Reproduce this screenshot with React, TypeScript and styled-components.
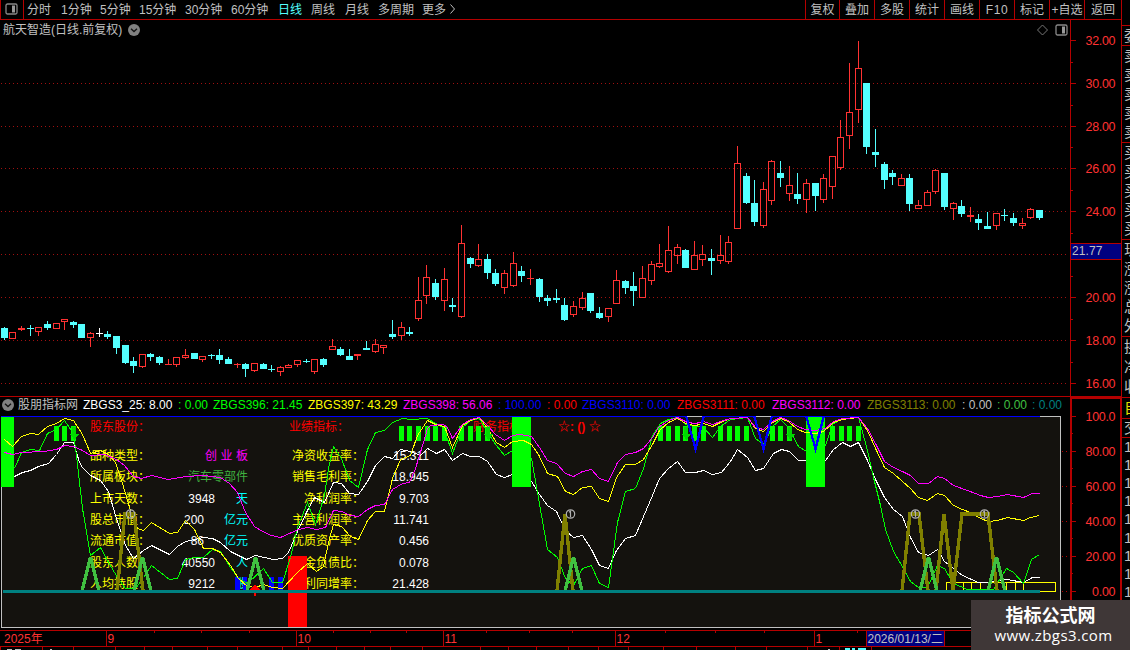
import React from "react";
import styled, { createGlobalStyle } from "styled-components";

const RED = "#b40000";
const LABEL = "#ff3232";
const GREY = "#c0c0c0";
const UP = "#ff3232";
const DOWN = "#54ffff";

const Global = createGlobalStyle`
  * { box-sizing: border-box; }
  html, body { margin: 0; background: #000; overflow: hidden; }
  body {
    font-family: "Liberation Sans", "Noto Sans CJK SC", sans-serif;
    font-size: 12px;
    line-height: 14px;
    color: ${GREY};
  }
`;

/* ---------- data ---------- */

// kind, high, body top, body bottom, low
type Candle = [string, number, number, number, number];
const candles: Candle[] = [
  ["c", 327, 328, 338, 340], ["r", 332, 332, 339, 339], ["r", 326, 328, 330, 331], ["c", 325, 328, 329, 336],
  ["r", 327, 327, 332, 336], ["c", 321, 324, 328, 330], ["r", 323, 323, 329, 329], ["r", 319, 319, 322, 330],
  ["c", 321, 322, 325, 328], ["c", 324, 324, 338, 338], ["r", 332, 333, 338, 347], ["w", 328, 333, 334, 337],
  ["c", 331, 334, 337, 339], ["c", 336, 336, 348, 354], ["c", 345, 345, 363, 364], ["c", 357, 361, 366, 373],
  ["r", 354, 354, 367, 368], ["c", 353, 354, 357, 361], ["c", 356, 357, 363, 365], ["r", 359, 364, 365, 365],
  ["r", 357, 357, 365, 367], ["r", 349, 355, 358, 359], ["c", 353, 353, 359, 359], ["r", 356, 356, 360, 362],
  ["c", 354, 355, 356, 359], ["c", 349, 355, 360, 364], ["c", 357, 359, 364, 364], ["r", 363, 364, 365, 368],
  ["c", 363, 364, 369, 377], ["r", 363, 363, 371, 372], ["c", 363, 364, 369, 369], ["c", 365, 369, 370, 372],
  ["r", 366, 367, 372, 376], ["r", 364, 365, 368, 368], ["r", 360, 360, 365, 367], ["c", 359, 361, 362, 363],
  ["r", 359, 359, 372, 374], ["c", 358, 359, 365, 367], ["r", 339, 346, 350, 350], ["c", 347, 349, 355, 356],
  ["c", 349, 356, 360, 360], ["r", 354, 354, 356, 360], ["c", 341, 348, 350, 350], ["r", 339, 344, 352, 353],
  ["r", 345, 345, 348, 354], ["c", 320, 334, 337, 339], ["r", 322, 327, 336, 340], ["c", 327, 332, 334, 336],
  ["r", 277, 300, 319, 321], ["r", 265, 277, 296, 304], ["c", 279, 283, 297, 300], ["r", 268, 279, 301, 311],
  ["c", 298, 305, 307, 312], ["r", 225, 243, 317, 318], ["c", 257, 258, 264, 268], ["r", 244, 259, 266, 267],
  ["c", 254, 259, 273, 279], ["c", 269, 273, 284, 286], ["r", 270, 273, 288, 294], ["r", 252, 263, 286, 287],
  ["c", 266, 271, 276, 282], ["r", 269, 278, 279, 285], ["c", 278, 279, 297, 302], ["c", 295, 298, 301, 306],
  ["c", 289, 298, 300, 303], ["c", 298, 305, 320, 321], ["r", 301, 306, 315, 317], ["r", 292, 298, 308, 310],
  ["c", 293, 293, 311, 313], ["c", 307, 313, 318, 319], ["r", 308, 308, 317, 322], ["r", 270, 280, 304, 304],
  ["c", 280, 281, 288, 294], ["c", 272, 286, 291, 306], ["r", 266, 278, 298, 298], ["r", 261, 264, 281, 285],
  ["r", 244, 263, 267, 268], ["r", 226, 250, 272, 273], ["r", 244, 247, 256, 264], ["c", 249, 250, 268, 268],
  ["r", 241, 255, 270, 270], ["r", 245, 254, 260, 266], ["c", 249, 258, 261, 275], ["r", 235, 255, 261, 264],
  ["r", 236, 242, 262, 264], ["r", 146, 163, 229, 229], ["c", 173, 176, 203, 204], ["c", 180, 203, 222, 226],
  ["r", 182, 189, 226, 228], ["r", 160, 161, 201, 205], ["c", 161, 173, 178, 187], ["r", 166, 185, 194, 201],
  ["c", 173, 194, 199, 204], ["r", 179, 183, 200, 213], ["c", 183, 183, 196, 211], ["r", 174, 178, 200, 203],
  ["r", 156, 156, 187, 199], ["r", 120, 137, 168, 170], ["r", 63, 112, 136, 149], ["r", 41, 68, 110, 123],
  ["c", 83, 83, 147, 154], ["c", 129, 152, 155, 167], ["c", 162, 164, 180, 189], ["c", 170, 173, 177, 185],
  ["r", 174, 178, 186, 186], ["c", 174, 178, 204, 211], ["r", 200, 205, 209, 209], ["r", 190, 192, 206, 206],
  ["r", 169, 170, 192, 194], ["c", 173, 173, 207, 210], ["r", 202, 203, 209, 220], ["c", 200, 206, 214, 217],
  ["r", 207, 215, 217, 222], ["c", 214, 219, 223, 230], ["c", 212, 226, 229, 229], ["r", 213, 213, 226, 230],
  ["c", 209, 215, 216, 221], ["c", 213, 218, 223, 226], ["r", 218, 223, 226, 229], ["r", 208, 209, 218, 219],
  ["c", 210, 210, 218, 220],
];

const magenta =
  "4,452 12,454 21,452 43,451 56,449 64,445 73,446 82,450 90,455 104,454 116,459 124,465 133,476 141,478 151,475 168,479 185,476 203,475 220,477 229,483 237,492 245,512 254,526 262,531 271,535 280,537 289,533 298,529 307,527 316,529 325,527 333,510 341,511 350,515 358,516 367,509 375,505 384,504 392,489 402,483 409,482 415,468 423,442 427,428 430,425 443,424 447,427 452,438 462,424 470,419 479,417 487,425 495,434 504,440 512,435 520,434 531,436 539,447 547,460 556,463 565,473 573,476 582,471 591,469 599,478 608,481 617,462 625,454 635,452 643,448 652,437 658,427 668,420 677,417 687,422 695,423 703,421 712,424 720,421 730,418 747,417 755,427 763,429 772,421 780,417 788,420 797,426 805,429 815,430 825,428 833,421 842,418 858,417 867,428 876,445 884,461 893,467 902,471 910,475 918,483 928,483 937,476 944,478 953,485 967,490 980,495 988,497 997,496 1007,494 1023,497 1032,493 1039,493";
const yellow =
  "4,439 12,446 21,436 30,433 38,434 47,426 56,423 64,418 73,420 82,434 90,453 100,450 108,454 115,462 122,483 130,510 137,528 143,530 151,522 169,533 177,532 185,520 194,529 203,548 212,548 220,552 230,565 238,578 247,586 255,587 263,584 272,587 282,588 297,572 307,563 316,571 323,566 328,542 333,524 341,526 350,536 358,539 367,520 375,511 384,511 392,478 400,459 410,455 417,435 427,420 435,424 444,426 452,447 462,425 470,420 479,417 487,428 496,442 504,447 512,441 523,440 531,444 538,454 547,473 557,476 565,491 573,494 582,487 591,486 599,498 608,501 616,477 625,464 635,464 643,459 652,444 659,430 668,422 677,418 687,424 695,425 703,423 712,426 720,422 730,418 747,417 755,428 763,431 772,422 780,418 788,421 797,429 805,432 815,433 823,431 833,422 842,419 858,417 867,430 876,450 884,467 893,473 902,481 910,488 918,497 927,500 937,493 944,495 953,505 962,509 970,512 980,518 988,521 997,520 1007,517 1023,520 1030,517 1039,515";
const white =
  "14,476 22,472 30,470 38,466 48,463 56,454 64,442 73,442 79,462 82,467 90,475 100,480 108,491 115,515 125,545 133,558 143,550 151,545 169,554 177,546 185,541 203,537 212,538 220,542 230,551 246,559 255,555 273,559 282,558 288,552 297,531 307,510 314,497 324,502 333,482 341,483 349,493 358,494 367,481 375,465 384,456 392,458 400,449 410,451 420,455 427,448 436,453 444,449 452,460 462,453 470,456 479,456 487,461 496,474 504,477 512,474 520,473 531,481 539,494 547,505 556,511 565,530 573,537 582,535 591,549 599,565 608,568 616,550 625,538 635,535 643,516 652,495 659,478 668,468 677,461 685,472 695,472 703,470 712,474 721,472 730,461 737,449 747,457 755,470 763,468 773,453 781,449 789,451 798,460 807,460 825,460 833,449 842,442 850,446 858,442 867,460 875,479 884,497 893,509 902,516 910,537 918,552 928,555 937,549 944,561 953,568 962,575 978,582 988,582 1007,579 1023,582 1032,577 1039,577";
const green =
  "14,468 21,452 30,449 39,450 47,433 56,429 64,420 73,433 76,455 82,508 90,555 100,547 108,562 117,577 125,588 135,588 143,577 151,565 160,572 169,579 177,578 185,559 194,557 203,557 212,549 220,551 230,567 238,578 247,583 263,568 272,582 282,582 290,557 297,527 307,502 315,524 324,495 328,468 333,446 341,458 349,480 358,487 367,449 375,432 384,430 392,422 402,418 410,419 427,418 435,423 443,427 452,453 462,427 470,420 479,418 487,432 496,445 504,455 512,450 531,458 537,492 547,549 557,557 565,578 573,585 582,568 591,565 599,583 608,587 617,522 625,491 635,488 643,468 652,435 660,423 668,419 677,417 687,425 702,426 712,437 720,426 730,419 747,417 755,438 763,444 772,426 780,419 788,427 798,446 806,451 825,445 832,424 842,418 858,417 867,450 873,477 880,505 885,529 893,551 903,568 910,581 918,587 927,587 937,565 944,568 953,583 967,589 993,589 1006,568 1013,572 1023,583 1031,559 1039,554";

const smallBars = [54, 62, 71, 399, 407, 416, 425, 433, 442, 459, 468, 476, 485, 658, 666, 675, 683, 692, 701, 718, 727, 735, 744, 770, 778, 787, 830, 839, 847, 856];
const arrows = [73, 487, 685, 789];
const wideBars: [number, number][] = [[1, 13], [512, 19], [806, 19]];
const circles = [130, 570, 915, 984];
const greenPeaks = [90, 142, 255, 573, 928, 996];
const olive = ["117,591 125,514 134,514 143,591", "557,591 565,514 573,591", "902,591 910,514 919,514 928,591", "936,591 944,514 953,591 962,514 988,514 997,591"];
const blueDips = [695, 763, 815];

const gridYs = [83, 126, 168, 211, 254, 297, 340, 383];
const prices: [number, string][] = [
  [40, "32.00"], [83, "30.00"], [126, "28.00"], [168, "26.00"], [211, "24.00"], [297, "20.00"], [340, "18.00"], [383, "16.00"],
];
const levels: [number, string][] = [
  [416, "100.0"], [451, "80.00"], [486, "60.00"], [521, "40.00"], [556, "20.00"], [591, "0.00"],
];

/* ---------- layout ---------- */

const Page = styled.div`
  position: relative;
  display: flex;
  width: 1130px;
  height: 650px;
  overflow: hidden;
  background: #000;
`;
const Main = styled.div`
  display: flex;
  flex-direction: column;
  width: 1122px;
  flex: none;
`;

const Toolbar = styled.div`
  display: flex;
  height: 20px;
  border-bottom: 1px solid ${RED};
  border-right: 1px solid ${RED};
  flex: none;
`;
const ToggleBox = styled.div`
  width: 24px;
  padding: 3px 0 0 4px;
  border-left: 1px solid ${RED};
  border-right: 1px solid ${RED};
`;
const Tab = styled.span<{ $w: number; $active?: boolean }>`
  width: ${(p) => p.$w}px;
  padding-top: 3px;
  white-space: nowrap;
  color: ${(p) => (p.$active ? DOWN : GREY)};
`;
const Periods = styled.div`
  display: flex;
  flex: 1;
  padding-left: 3px;
`;
const Tool = styled.span<{ $w: number; $wide?: boolean }>`
  width: ${(p) => p.$w}px;
  border-left: 1px solid ${RED};
  padding-top: 3px;
  text-align: center;
  white-space: nowrap;
  letter-spacing: ${(p) => (p.$wide ? "0.6px" : "0")};
`;

const PricePane = styled.div`
  position: relative;
  height: 376px;
  flex: none;
`;
const Title = styled.div`
  position: relative;
  display: flex;
  align-items: center;
  height: 19px;
  padding-left: 3px;
  gap: 5px;
  white-space: nowrap;
`;
const TitleText = styled.span`
  width: 120px;
`;
const TitleIcons = styled.div`
  display: flex;
  gap: 7px;
  margin-left: auto;
  padding-right: 54px;
`;
const Canvas = styled.svg`
  position: absolute;
  left: 0;
  top: 0;
  display: block;
  text {
    font-size: 12.5px;
    fill: ${LABEL};
  }
`;
const PriceTag = styled.div`
  position: absolute;
  left: 1071px;
  top: 223px;
  width: 50px;
  height: 17px;
  padding-left: 1px;
  border: solid ${RED};
  border-width: 1px 0;
  background: #000080;
  letter-spacing: 0.1px;
`;

const IndicatorPane = styled.div`
  position: relative;
  height: 234px;
  flex: none;
  border-top: 1px solid ${RED};
`;
const Legend = styled.div`
  display: flex;
  align-items: center;
  height: 19px;
  padding: 0 0 3px 2px;
  white-space: nowrap;
`;
const LegendName = styled.span`
  width: 69px;
  padding-left: 4px;
`;
const LegendItem = styled.span<{ $w: number; $c: string }>`
  width: ${(p) => p.$w}px;
  color: ${(p) => p.$c};
`;
const Plot = styled.div`
  position: relative;
  display: flex;
  width: 1060px;
  height: 212px;
  margin-left: 1px;
  padding-left: 88px;
  border: 1px solid ${GREY};
  background: #14120e;
`;
const InfoTable = styled.div<{ $w: number }>`
  width: ${(p) => p.$w}px;
  flex: none;
`;
const Heading = styled.div<{ $shift?: number; $strong?: boolean }>`
  height: 28px;
  padding: 3px 0 0 ${(p) => p.$shift ?? 0}px;
  color: #f00;
  font-weight: ${(p) => (p.$strong ? 700 : 400)};
  white-space: pre;
`;
const Row = styled.div`
  display: flex;
  height: 21.33px;
  padding-top: 4px;
  white-space: nowrap;
`;
const Name = styled.span<{ $w: number; $right?: boolean }>`
  width: ${(p) => p.$w}px;
  color: #ff0;
  text-align: ${(p) => (p.$right ? "right" : "left")};
`;
const Figure = styled.span<{ $w: number }>`
  width: ${(p) => p.$w}px;
  color: #fff;
  text-align: right;
`;
const Unit = styled.span<{ $c: string; $track?: number }>`
  flex: 1;
  color: ${(p) => p.$c};
  letter-spacing: ${(p) => p.$track ?? 0}px;
  margin-right: ${(p) => -(p.$track ?? 0)}px;
  text-align: right;
`;

const TimeAxis = styled.div`
  position: relative;
  display: flex;
  height: 17px;
  flex: none;
  border: solid ${RED};
  border-width: 1px 0;
  color: ${LABEL};
`;
const Month = styled.span<{ $w: number; $pad?: number; $on?: boolean }>`
  width: ${(p) => p.$w}px;
  padding: 1px 0 0 ${(p) => p.$pad ?? 0.5}px;
  border-right: 1px solid ${RED};
  background: ${(p) => (p.$on ? "#000080" : "none")};
  color: ${(p) => (p.$on ? GREY : LABEL)};
  white-space: nowrap;
`;
const Ticker = styled.svg`
  display: block;
  height: 3px;
`;

const Side = styled.div`
  width: 8px;
  padding-top: 25px;
  overflow: hidden;
`;
const Group = styled.div<{ $h: number; $c?: string }>`
  display: flex;
  flex-direction: column;
  justify-content: space-around;
  height: ${(p) => p.$h}px;
  padding-left: 2px;
  border-top: 1px solid ${RED};
  font-size: 15px;
  line-height: 18px;
  white-space: nowrap;
  color: ${(p) => p.$c ?? GREY};
`;

const Watermark = styled.div`
  position: absolute;
  right: 0;
  bottom: 0;
  width: 159px;
  height: 50px;
  padding: 3px 0 0 0;
  background: #3f3737;
  color: #fff;
  text-align: center;
  font-family: "Open Sans", "Noto Sans CJK SC", sans-serif;
`;
const MarkName = styled.div`
  font-family: "Noto Sans CJK SC", sans-serif;
  font-size: 18px;
  font-weight: 700;
  line-height: 22px;
`;
const MarkUrl = styled.div`
  padding-left: 6px;
  font-size: 15px;
  line-height: 21px;
  letter-spacing: 0.4px;
`;

/* ---------- drawings ---------- */

const PanelIcon = () => (
  <svg width="13" height="12" viewBox="0 0 13 12">
    <rect x="1" y="1" width="11" height="10" rx="1.5" fill="none" stroke="#888" strokeWidth="1.3" />
    <rect x="7" y="2.5" width="3" height="7" fill="#999" />
  </svg>
);
const Disc = () => (
  <svg width="12" height="12" viewBox="0 0 12 12">
    <circle cx="6" cy="6" r="6" fill="#808080" />
    <path d="M3 4.8 6 7.6 9 4.8" fill="none" stroke="#111" strokeWidth="1.3" />
  </svg>
);

const centre = (i: number) => Math.floor(4.3 + i * 8.625);

const CandleMark = ({ i, c }: { i: number; c: Candle }) => {
  const [kind, hi, top, bottom, lo] = c;
  const x = centre(i);
  const color = kind === "r" ? UP : kind === "c" ? DOWN : "#fff";
  const hollow = kind === "r" && bottom - top > 2;
  return (
    <g fill={color}>
      {top > hi && <rect x={x} y={hi} width="1" height={top - hi} />}
      {lo > bottom && <rect x={x} y={bottom} width="1" height={lo - bottom} />}
      {hollow ? (
        <path
          fillRule="evenodd"
          d={`M${x - 3} ${top}h7v${bottom - top}h-7zM${x - 2} ${top + 1}v${bottom - top - 2}h5v${top + 2 - bottom}z`}
        />
      ) : (
        <rect x={x - 3} y={top} width="7" height={bottom - top} />
      )}
    </g>
  );
};

const PriceChart = () => (
  <Canvas width="1122" height="376" viewBox="0 20 1122 376" shapeRendering="crispEdges">
    {gridYs.map((y) => (
      <line key={y} x1="1" x2="1067" y1={y + 0.5} y2={y + 0.5} stroke="#a01010" strokeDasharray="1 3" />
    ))}
    {candles.map((c, i) => (
      <CandleMark key={i} i={i} c={c} />
    ))}
    <rect x="1070" y="20" width="1" height="376" fill={RED} />
    <rect x="1121" y="20" width="1" height="376" fill={RED} />
    {[40, ...gridYs].map((y) => (
      <rect key={y} x="1071" y={y} width="5" height="1" fill={RED} />
    ))}
    {[62, 105, 147, 190, 233, 276, 319, 362].map((y) => (
      <rect key={y} x="1071" y={y} width="2" height="1" fill={RED} />
    ))}
    {prices.map(([y, t]) => (
      <text key={t} x="1085.5" y={y + 5} textLength="30">{t}</text>
    ))}
  </Canvas>
);

const IndicatorChart = () => (
  <Canvas width="1122" height="233" viewBox="0 397 1122 233" shapeRendering="crispEdges">
    <rect x="1" y="416" width="1039" height="1" fill="#00f" />
    {wideBars.map(([x, w]) => (
      <rect key={x} x={x} y="417" width={w} height="70" fill="#0f0" />
    ))}
    {smallBars.map((x) => (
      <rect key={x} x={x} y="426" width="5" height="15" fill="#0f0" />
    ))}
    <rect x="288" y="556" width="19" height="71" fill="#f00" />
    {[[235, 5], [243, 4], [269, 5], [278, 5]].map(([x, w]) => (
      <rect key={x} x={x} y="577" width={w} height="14" fill="#00f" />
    ))}
    <g fill="none" transform="translate(0.5 0.5)">
      <g stroke="#ff0">
        <rect x="946" y="582" width="109" height="9" />
        {[963, 971, 980, 997, 1006, 1015, 1023].map((x) => (
          <line key={x} x1={x} x2={x} y1="582" y2="591" />
        ))}
      </g>
      <polyline points={white} stroke="#fff" />
      <polyline points={green} stroke="#0f0" />
    </g>
    {/* the signal columns hide the slower averages that pass behind them */}
    <rect x="512" y="442" width="19" height="45" fill="#0f0" />
    <rect x="806" y="434" width="19" height="53" fill="#0f0" />
    <g fill="none" transform="translate(0.5 0.5)">
      <polyline points={yellow} stroke="#ff0" />
      <polyline points={magenta} stroke="#f0f" />
    </g>
    {arrows.map((x) => (
      <path key={x} d={`M${x - 1} 427h4v7h3l-4.5 6l-4.5 -6h2z`} fill="#00d800" />
    ))}
    <g fill="none" strokeWidth="3.4">
      {olive.map((p) => (
        <polyline key={p} points={p} stroke="#808000" />
      ))}
      {greenPeaks.map((x) => (
        <polyline key={x} points={`${x - 8},591 ${x + 0.5},557 ${x + 9},591`} stroke="#40c040" />
      ))}
      {blueDips.map((x) => (
        <polyline key={x} points={`${x - 8.5},417 ${x + 0.5},449 ${x + 8.5},417`} stroke="#00f" strokeWidth="2.2" />
      ))}
    </g>
    <rect x="687" y="416" width="15" height="1" fill={GREY} />
    <rect x="756" y="416" width="15" height="1" fill={GREY} />
    <path d="M255 584l5 6h-4v6h-2v-6h-4z" fill="#f00" />
    <rect x="3" y="590" width="1037" height="3" fill="#008080" />
    <g shapeRendering="auto" fill="none" stroke="#b0b0b0" strokeWidth="1.2">
      {circles.map((x) => (
        <g key={x}>
          <circle cx={x + 0.5} cy="514" r="4.2" />
          <path d={`M${x - 1} 512.2l1.5-1v6`} />
        </g>
      ))}
    </g>
    <path d="M1071 630V398H1121V630" fill="none" stroke={RED} strokeWidth="2" />
    {levels.map(([y, t]) => (
      <g key={t}>
        <rect x="1072" y={y} width="4" height="1" fill={RED} />
        {y > 416 && <path d={`M1062 ${y + 0.5}h1m3 0h1`} stroke={RED} />}
        {y < 591 && <rect x="1072" y={y + 17} width="1" height="1" fill={RED} />}
        <text x={t.length === 4 ? 1092 : 1085.5} y={y + 5} textLength={t.length === 4 ? 23.5 : 30}>{t}</text>
      </g>
    ))}
  </Canvas>
);

const Ticks = ({ xs, h }: { xs: number[]; h: number }) => (
  <>
    {xs.map((x) => (
      <rect key={x} x={x} y="0" width="1" height={h} fill={RED} />
    ))}
  </>
);

/* ---------- content ---------- */

const periods: [string, number][] = [
  ["分时", 34], ["1分钟", 39], ["5分钟", 39], ["15分钟", 46], ["30分钟", 46], ["60分钟", 47],
  ["日线", 33], ["周线", 34], ["月线", 33], ["多周期", 44], ["更多", 26],
];
const tools: [string, number][] = [
  ["复权", 34], ["叠加", 35], ["多股", 35], ["统计", 35], ["画线", 35], ["F10", 35], ["标记", 35], ["+自选", 35], ["返回", 37],
];
const legend: [string, string, number][] = [
  ["ZBGS3_25: 8.00", "#fff", 95], [": 0.00", "#0f0", 35], ["ZBGS396: 21.45", "#0f0", 95],
  ["ZBGS397: 43.29", "#ff0", 95], ["ZBGS398: 56.06", "#f0f", 95], [": 100.00", "#00f", 49],
  [": 0.00", "#f00", 35], ["ZBGS3110: 0.00", "#00f", 95], ["ZBGS3111: 0.00", "#f00", 95],
  ["ZBGS3112: 0.00", "#f0f", 95], ["ZBGS3113: 0.00", "#808000", 95], [": 0.00", "#c0c0c0", 35],
  [": 0.00", "#40c040", 35], [": 0.00", "#008080", 35],
];
// name, number, width up to the number's right edge, unit, colour, tracking
const company: [string, string, number, string, string, number][] = [
  ["品种类型：", "", 0, "创业板", "#f0f", 3.5],
  ["所属板块：", "", 0, "汽车零部件", "#40b040", 0],
  ["上市天数：", "3948", 65, "天", "#0ff", 0],
  ["股总市值：", "200", 54, "亿元", "#0ff", 0],
  ["流通市值：", "86", 54, "亿元", "#0ff", 0],
  ["股东人数：", "40550", 65, "人", "#0ff", 0],
  ["人均持股：", "9212", 65, "股", "#0ff", 0],
];
const results: [string, string][] = [
  ["净资收益率：", "15.311"], ["销售毛利率：", "18.945"], ["净利润率：", "9.703"], ["主营利润率：", "11.741"],
  ["优质资产率：", "0.456"], ["资金负债比：", "0.078"], ["净利同增率：", "21.428"],
];

export default function App() {
  return (
    <Page>
      <Global />
      <Main>
        <Toolbar>
          <ToggleBox><PanelIcon /></ToggleBox>
          <Periods>
            {periods.map(([t, w]) => (
              <Tab key={t} $w={w} $active={t === "日线"}>{t}</Tab>
            ))}
            <svg width="10" height="18" viewBox="0 0 10 18">
              <path d="M2.5 4.5 6.5 9 2.5 13.5" fill="none" stroke={GREY} />
            </svg>
          </Periods>
          {tools.map(([t, w]) => (
            <Tool key={t} $w={w} $wide={t === "F10"}>{t}</Tool>
          ))}
        </Toolbar>

        <PricePane>
          <PriceChart />
          <Title>
            <TitleText>航天智造(日线.前复权)</TitleText>
            <Disc />
            <TitleIcons>
              <svg width="11" height="12" viewBox="0 0 11 12">
                <path d="M5.5 1 10.5 6 5.5 11 .5 6Z" fill="none" stroke="#777" />
              </svg>
              <PanelIcon />
            </TitleIcons>
          </Title>
          <PriceTag>21.77</PriceTag>
        </PricePane>

        <IndicatorPane>
          <Legend>
            <Disc />
            <LegendName>股朋指标网</LegendName>
            {legend.map(([t, c, w], i) => (
              <LegendItem key={i} $w={w} $c={c}>{t}</LegendItem>
            ))}
          </Legend>
          <Plot>
            <InfoTable $w={158}>
              <Heading>股东股份：</Heading>
              {company.map(([name, figure, w, unit, color, track]) => (
                <Row key={name}>
                  <Name $w={60}>{name}</Name>
                  <Figure $w={w}>{figure}</Figure>
                  <Unit $c={color} $track={track}>{unit}</Unit>
                </Row>
              ))}
            </InfoTable>
            <InfoTable $w={182}>
              <Heading $shift={41}>业绩指标：</Heading>
              {results.map(([name, figure]) => (
                <Row key={name}>
                  <Name $w={116} $right>{name}</Name>
                  <Figure $w={65}>{figure}</Figure>
                </Row>
              ))}
            </InfoTable>
            <InfoTable $w={128}>
              <Heading $shift={43}>财务指标：</Heading>
            </InfoTable>
            <InfoTable $w={60}>
              <Heading $strong>☆: () ☆</Heading>
            </InfoTable>
          </Plot>
          <IndicatorChart />
        </IndicatorPane>

        <TimeAxis>
          <Month $w={107} $pad={4}>2025年</Month>
          <Month $w={190}>9</Month>
          <Month $w={147}>10</Month>
          <Month $w={172}>11</Month>
          <Month $w={199}>12</Month>
          <Month $w={52}>1</Month>
          <Month $w={78} $on>2026/01/13/二</Month>
          <Canvas width="1122" height="3" viewBox="0 0 1122 3">
            <Ticks xs={[154, 201, 249, 333, 370, 406, 486, 529, 572, 665, 715, 764, 857]} h={2} />
          </Canvas>
        </TimeAxis>
        <Ticker width="1122" height="3" viewBox="0 0 1122 3">
          <Ticks xs={[0, 42, 73, 115, 144, 172, 207, 237, 282, 308, 336, 364, 390, 422, 480, 508, 536, 568, 598, 628, 663, 696, 735, 766, 807, 839, 871]} h={3} />
          <path d="M7 2.5h5m3 0h6m29 0h2M828 2.5h2" stroke={GREY} />
          <path d="M845 2h5m2 0h3m3 0h8" stroke={DOWN} strokeWidth="2" />
        </Ticker>
      </Main>

      <Side>
        <Group $h={20}><span>委</span></Group>
        <Group $h={97}>{[1, 2, 3, 4, 5].map((n) => <span key={n}>卖</span>)}</Group>
        <Group $h={97}>{[1, 2, 3, 4, 5].map((n) => <span key={n}>买</span>)}</Group>
        <Group $h={97}>{["现", "涨", "涨", "总", "外"].map((t, n) => <span key={n}>{t}</span>)}</Group>
        <Group $h={61}>{["换", "净", "收"].map((t) => <span key={t}>{t}</span>)}</Group>
        <Group $h={21} $c="#e0e000"><span>自</span></Group>
        <Group $h={19}><span>交</span></Group>
        <Group $h={164}>{[1, 2, 3, 4, 5, 6, 7, 8, 9].map((n) => <span key={n}>1</span>)}</Group>
      </Side>

      <Watermark>
        <MarkName>指标公式网</MarkName>
        <MarkUrl>www.zbgs3.com</MarkUrl>
      </Watermark>
    </Page>
  );
}
